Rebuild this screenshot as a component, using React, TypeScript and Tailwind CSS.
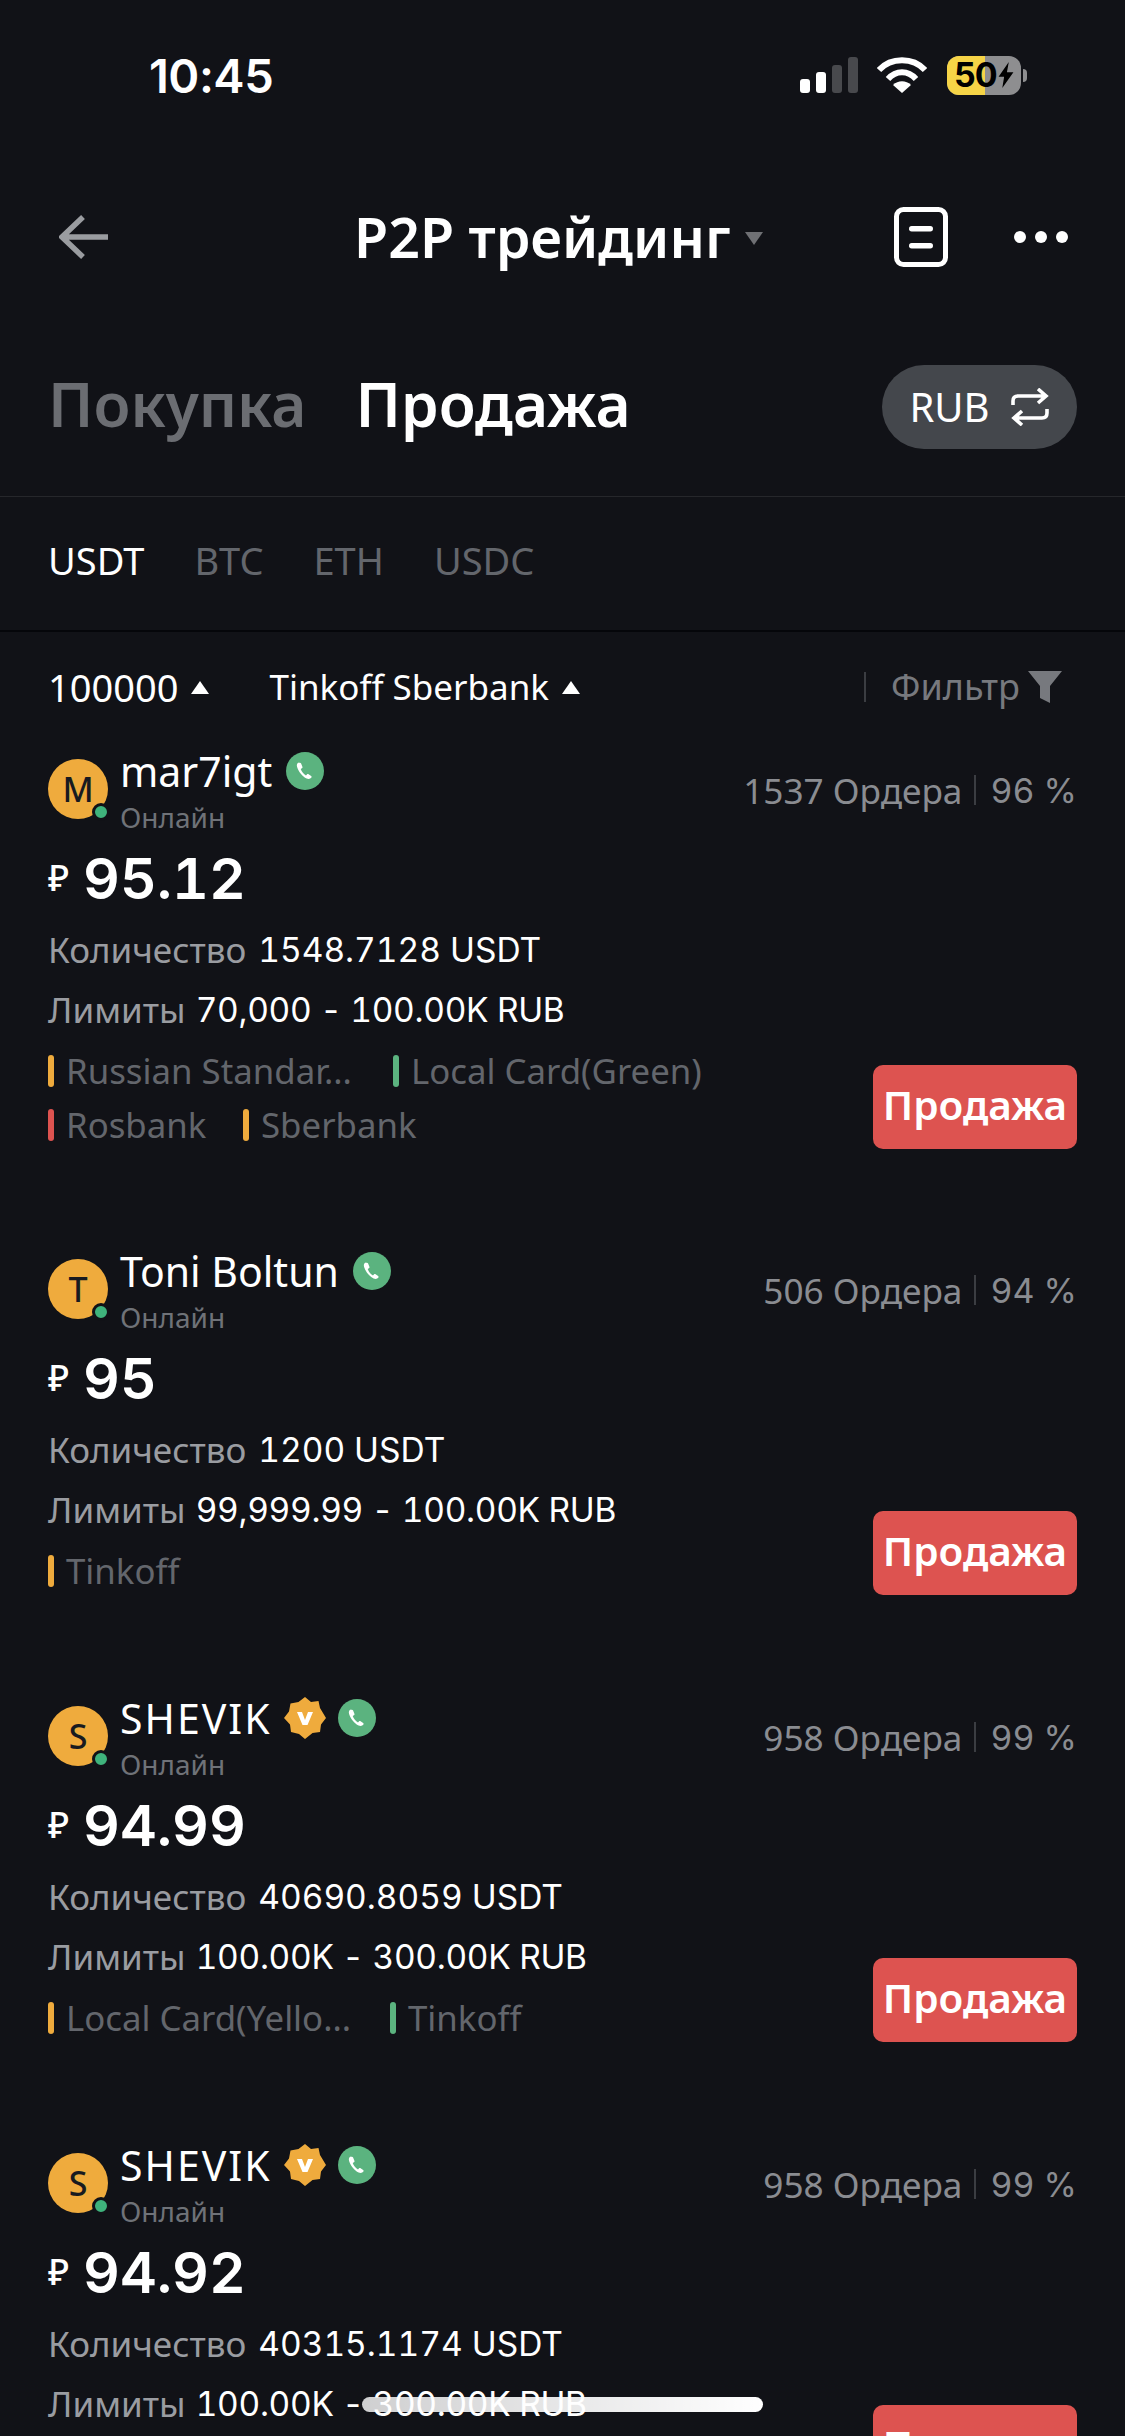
import React from "react";

const Y = "bg-[#efab3d]";
const G = "bg-[#5bb37f]";
const R = "bg-[#dd5350]";

type Tag = { c: string; t: string; w?: string };
type Card = {
  l: string; name: string; nameCls?: string; v?: boolean; orders: string; pct: string; price: string; qty: string; lim: string;
  rows: Tag[][]; h: string;
};

const cards: Card[] = [
  { l: "M", name: "mar7igt", orders: "1537 Ордера", pct: "96 %", price: "95.12", qty: "1548.7128 USDT", lim: "70,000 - 100.00K RUB", h: "h-[500px]",
    rows: [[{ c: Y, t: "Russian Standar...", w: "w-[345px]" }, { c: G, t: "Local Card(Green)" }], [{ c: R, t: "Rosbank", w: "w-[195px]" }, { c: Y, t: "Sberbank" }]] },
  { l: "T", name: "Toni Boltun", orders: "506 Ордера", pct: "94 %", price: "95", qty: "1200 USDT", lim: "99,999.99 - 100.00K RUB", h: "h-[447px]",
    rows: [[{ c: Y, t: "Tinkoff" }]] },
  { l: "S", name: "SHEVIK", nameCls: "tracking-[2px]", v: true, orders: "958 Ордера", pct: "99 %", price: "94.99", qty: "40690.8059 USDT", lim: "100.00K - 300.00K RUB", h: "h-[447px]",
    rows: [[{ c: Y, t: "Local Card(Yello...", w: "w-[342px]" }, { c: G, t: "Tinkoff" }]] },
  { l: "S", name: "SHEVIK", nameCls: "tracking-[2px]", v: true, orders: "958 Ордера", pct: "99 %", price: "94.92", qty: "40315.1174 USDT", lim: "100.00K - 300.00K RUB", h: "h-[447px]",
    rows: [[{ c: Y, t: "Local Card(Yello...", w: "w-[342px]" }]] },
];

function Phone() {
  return (
    <svg viewBox="0 0 38 38" className="w-[38px] h-[38px] shrink-0">
      <circle cx="19" cy="19" r="19" fill="#5bb37f" />
      <path d="M12.500 10.500c-1.500.9-2 2.400-1.400 4.400 1.400 4.800 5.400 9.600 9.500 11.600 1.700.8 3.800.6 4.800-.9.400-.6.200-1.200-.3-1.600l-2.500-1.700c-.6-.4-1.200-.3-1.700.2l-.9 1c-2.300-1.200-4.300-3.700-5.300-6.400l1.200-.8c.6-.4.800-1 .5-1.600l-1.300-3.200c-.3-.7-1.800-.8-3.100-1z" fill="#fff" />
    </svg>
  );
}

function VBadge() {
  return (
    <svg viewBox="0 0 42 42" className="w-[42px] h-[42px] shrink-0">
      <path d="M21 0l6 5 7.500-1 1.500 7 6 10-5 6.500-1 7.500-7.500 1-7.500 6-6-5-8-2-1-7.500L0 21l5-6.500L6.500 6.500 14.500 5z" fill="#efab3d" />
      <path d="M13 15h5l3 8 3-8h5l-5.500 13h-5z" fill="#fff" />
    </svg>
  );
}

function Tri({ className = "" }: { className?: string }) {
  return <span className={`w-0 h-0 border-x-[9px] border-x-transparent border-b-[13px] border-b-white ${className}`} />;
}

function OrderCard({ c }: { c: Card }) {
  return (
    <div className={`${c.h} px-[48px] flex justify-between`}>
      <div className="flex flex-col">
        <div className="flex">
          <div className="relative mt-[27px] w-[60px] h-[60px] rounded-full bg-[#efab3d] flex items-center justify-center text-[#181a20] text-[34px] font-medium leading-none">
            {c.l}
            <span className="absolute right-[-2px] bottom-[-2px] w-[18px] h-[18px] rounded-full bg-[#3fb37c] border-[3px] border-[#111217]" />
          </div>
          <div className="ml-[12px] flex flex-col">
            <div className="flex items-center h-[46px] mt-[16px]">
              <span className={`text-[41px] leading-none text-white whitespace-nowrap ${c.nameCls ?? ""}`}>{c.name}</span>
              {c.v && <span className="ml-[12px]"><VBadge /></span>}
              <span className={c.v ? "ml-[12px]" : "ml-[14px]"}><Phone /></span>
            </div>
            <span className="mt-[3px] text-[28px] leading-[40px] text-[#6f7278]">Онлайн</span>
          </div>
        </div>
        <div className="flex items-center h-[72px] mt-[5px]">
          <span className="text-[36px] text-white font-medium w-[35px]">₽</span>
          <span className="text-[57px] leading-none font-semibold text-white font-['Inter',sans-serif] tabular-nums">{c.price}</span>
        </div>
        <div className="mt-[15px] h-[42px] flex items-center whitespace-nowrap">
          <span className="text-[35px] text-[#9a9ca1]">Количество</span>
          <span className="ml-[12px] text-[33.500px] text-white font-['Inter',sans-serif] tabular-nums">{c.qty}</span>
        </div>
        <div className="mt-[18px] h-[42px] flex items-center whitespace-nowrap">
          <span className="text-[35px] text-[#9a9ca1]">Лимиты</span>
          <span className="ml-[10px] text-[33.500px] tracking-[-0.3px] text-white font-['Inter',sans-serif] tabular-nums">{c.lim}</span>
        </div>
        <div className="mt-[13px] flex flex-col">
          {c.rows.map((r, i) => (
            <div key={i} className="h-[54px] flex items-center">
              {r.map((t, j) => (
                <div key={j} className={`${t.w ?? ""} flex items-center`}>
                  <span className={`w-[6px] h-[32px] rounded-full ${t.c}`} />
                  <span className="ml-[12px] text-[34.800px] text-[#63666c] whitespace-nowrap">{t.t}</span>
                </div>
              ))}
            </div>
          ))}
        </div>
      </div>
      <div className="flex flex-col items-end">
        <div className="mt-[37px] flex items-center h-[42px] text-[#8a8c91] whitespace-nowrap">
          <span className="text-[35.200px]">{c.orders}</span>
          <span className="ml-[12px] mr-[14px] w-[2px] h-[30px] bg-[#3b3d42]" />
          <span className="text-[34px] font-['Inter',sans-serif] tabular-nums">{c.pct}</span>
        </div>
        <button className={`${c.rows.length > 1 ? "mt-[254px]" : "mt-[200px]"} w-[204px] h-[84px] pb-[4px] rounded-[10px] bg-[#dd5350] text-white text-[40.500px] font-semibold flex items-center justify-center whitespace-nowrap`}>
          Продажа
        </button>
      </div>
    </div>
  );
}

export default function App() {
  return (
    <div className="relative w-[1125px] h-[2436px] overflow-hidden bg-[#111217] font-['Noto_Sans',sans-serif]">
      {/* status bar */}
      <div className="h-[150px] pl-[149px] pr-[98px] flex items-center justify-between">
        <span className="text-[47px] font-semibold text-white font-['Inter',sans-serif] tracking-[-0.5px] mt-[2px]">10:45</span>
        <div className="flex items-center">
          <svg viewBox="0 0 58 36" className="w-[58px] h-[36px]">
            <rect x="0" y="22" width="10" height="14" rx="3" fill="#fff" />
            <rect x="16" y="15" width="10" height="21" rx="3" fill="#fff" />
            <rect x="32" y="8" width="10" height="28" rx="3" fill="#48494d" />
            <rect x="48" y="0" width="10" height="36" rx="3" fill="#48494d" />
          </svg>
          <svg viewBox="0 0 50 36" className="w-[50px] h-[36px] ml-[19px]">
            <path d="M2 13 C14 0 36 0 48 13" fill="none" stroke="#fff" strokeWidth="6" />
            <path d="M11 22 C19 13 31 13 39 22" fill="none" stroke="#fff" strokeWidth="6" />
            <path d="M25 36 L16 28 C21 23 29 23 34 28 Z" fill="#fff" />
          </svg>
          <div className="relative ml-[20px] w-[74px] h-[39px] rounded-[12px] overflow-hidden bg-[#8e8e90] flex items-center">
            <span className="absolute left-0 top-0 h-full w-[38px] bg-[#f6d447]" />
            <span className="relative ml-[7px] text-[34px] font-bold text-black leading-none font-['Inter',sans-serif] tracking-[-1px]">50</span>
            <svg viewBox="0 0 16 28" className="relative w-[16px] h-[26px] ml-[1px]"><path d="M11 0L0 16h6l-2 12L16 11H9z" fill="#000" /></svg>
          </div>
          <span className="w-[4px] h-[13px] ml-[2px] rounded-r-full bg-[#8e8e90]" />
        </div>
      </div>
      {/* nav */}
      <div className="h-[174px] pl-[59px] flex items-center">
        <svg viewBox="0 0 50 44" className="w-[50px] h-[44px] shrink-0">
          <path d="M24 2 L3 22 L24 42 M3 22 H49" fill="none" stroke="#9a9ca0" strokeWidth="5.500" />
        </svg>
        <div className="ml-[245px] flex items-center w-[414px] shrink-0">
          <span className="text-[55.500px] font-semibold text-white whitespace-nowrap leading-none">P2P трейдинг</span>
          <span className="ml-[14px] mt-[2px] w-0 h-0 border-x-[9px] border-x-transparent border-t-[13px] border-t-[#6f7074]" />
        </div>
        <svg viewBox="0 0 54 60" className="ml-[126px] w-[54px] h-[60px] shrink-0">
          <rect x="2.500" y="2.500" width="49" height="55" rx="7" fill="none" stroke="#fff" strokeWidth="5" />
          <rect x="15" y="19" width="24" height="5.500" rx="2.700" fill="#fff" />
          <rect x="15" y="36" width="24" height="5.500" rx="2.700" fill="#fff" />
        </svg>
        <svg viewBox="0 0 54 12" className="ml-[66px] w-[54px] h-[12px] shrink-0">
          <circle cx="6" cy="6" r="6" fill="#fff" /><circle cx="27" cy="6" r="6" fill="#fff" /><circle cx="48" cy="6" r="6" fill="#fff" />
        </svg>
      </div>
      {/* tabs */}
      <div className="h-[173px] pl-[48px] pr-[48px] pb-[12px] flex items-center justify-between border-b border-[#26272b]">
        <div className="flex items-center gap-[49px] text-[60.500px] font-semibold leading-none">
          <span className="text-[#6b6d72]">Покупка</span>
          <span className="text-white">Продажа</span>
        </div>
        <div className="mt-[5px] w-[195px] h-[84px] rounded-full bg-[#44474c] flex items-center justify-center gap-[20px]">
          <span className="text-[40px] text-white leading-none">RUB</span>
          <svg viewBox="0 0 40 38" className="w-[40px] h-[38px]">
            <path d="M3 17 V13 Q3 8 8 8 H36 M28 1 L36 8 L28 15 M37 21 V25 Q37 30 32 30 H4 M12 23 L4 30 L12 37" fill="none" stroke="#fff" strokeWidth="3.600" />
          </svg>
        </div>
      </div>
      {/* coins */}
      <div className="h-[135px] px-[48px] pb-[7px] flex items-center gap-[50px] text-[38px] text-[#63666c] border-b-2 border-[#05060a]">
        <span className="text-white">USDT</span><span>BTC</span><span>ETH</span><span>USDC</span>
      </div>
      {/* filter */}
      <div className="h-[100px] pl-[48px] pr-[63px] pt-[10px] flex items-center text-white">
        <span className="text-[38px]">100000</span>
        <Tri className="ml-[13px]" />
        <span className="ml-[60px] text-[35px]">Tinkoff Sberbank</span>
        <Tri className="ml-[13px]" />
        <span className="ml-auto w-[2px] h-[30px] bg-[#3b3d42]" />
        <span className="ml-[25px] text-[36px] text-[#77797e]">Фильтр</span>
        <svg viewBox="0 0 34 32" className="ml-[8px] w-[34px] h-[32px]"><path d="M0 0H34L22 15V32L12 27V15Z" fill="#77797e" /></svg>
      </div>
      {/* list */}
      <div className="flex flex-col">
        {cards.map((c, i) => <OrderCard key={i} c={c} />)}
      </div>
      {/* home indicator */}
      <div className="absolute left-[362px] top-[2397px] w-[401px] h-[15px] rounded-full bg-gradient-to-r from-white/80 via-white/90 to-white" />
    </div>
  );
}
